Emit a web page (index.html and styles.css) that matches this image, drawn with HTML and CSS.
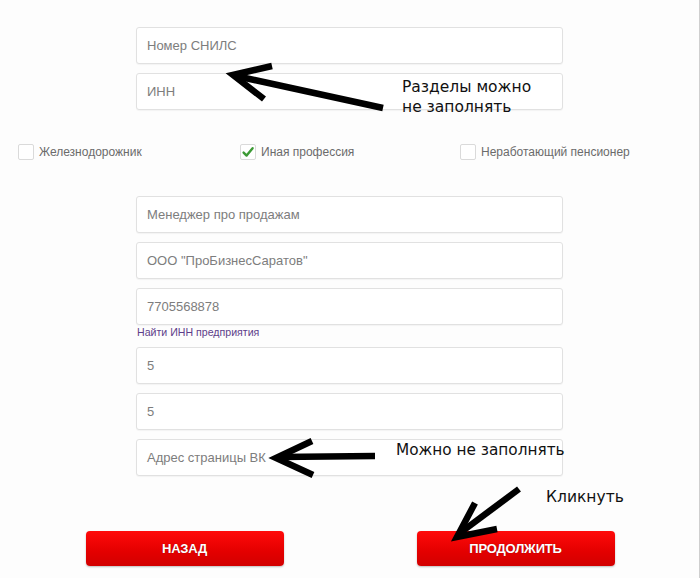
FILE: index.html
```html
<!DOCTYPE html>
<html lang="ru">
<head>
<meta charset="utf-8">
<title>Анкета</title>
<link rel="stylesheet" href="styles.css">
</head>
<body>
<div class="page">
  <div class="fields fields-top">
    <div class="input">Номер СНИЛС</div>
    <div class="input">ИНН</div>
  </div>

  <div class="checks">
    <label class="check"><span class="box"></span><span class="check-label">Железнодорожник</span></label>
    <label class="check"><span class="box checked"><svg viewBox="0 0 16 16" width="16" height="16"><path d="M3.6 8.6 L6.6 11.6 L12.6 4.2" fill="none" stroke="#3c9a35" stroke-width="2.4" stroke-linecap="round" stroke-linejoin="round"/></svg></span><span class="check-label">Иная профессия</span></label>
    <label class="check"><span class="box"></span><span class="check-label">Неработающий пенсионер</span></label>
  </div>

  <div class="fields">
    <div class="input">Менеджер про продажам</div>
    <div class="input">ООО "ПроБизнесСаратов"</div>
    <div class="input-group">
      <div class="input">7705568878</div>
      <a class="link" href="#">Найти ИНН предприятия</a>
    </div>
    <div class="input">5</div>
    <div class="input">5</div>
    <div class="input">Адрес страницы ВК</div>
  </div>

  <div class="buttons">
    <div class="btn">НАЗАД</div>
    <div class="btn">ПРОДОЛЖИТЬ</div>
  </div>

  <svg class="arrows" viewBox="0 0 700 578" width="700" height="578">
    <g fill="none" stroke="#000" stroke-width="6.5" stroke-linejoin="miter">
      <line x1="383" y1="108" x2="236" y2="76"/>
      <polyline points="272,66 233,75 264,99"/>
      <line x1="375" y1="456" x2="279" y2="457"/>
      <polyline points="312,441 276,458 313,475"/>
      <line x1="519" y1="489" x2="460" y2="533"/>
      <polyline points="475,503 457,537 497,529"/>
    </g>
  </svg>
  <div class="note note-1">Разделы можно<br>не заполнять</div>
  <div class="note note-2">Можно не заполнять</div>
  <div class="note note-3">Кликнуть</div>
</div>
</body>
</html>
```

FILE: styles.css
```css
html, body {
  margin: 0;
  padding: 0;
  background: #fdfdfd;
}
body {
  font-family: "Liberation Sans", Arial, sans-serif;
}
.page {
  position: relative;
  width: 700px;
  height: 578px;
  border-right: 1px solid #cfcfcf;
  padding-top: 27px;
  box-sizing: border-box;
  overflow: hidden;
}
.fields {
  width: 427px;
  margin-left: 136px;
  display: flex;
  flex-direction: column;
  gap: 9px;
}
.input {
  height: 37px;
  box-sizing: border-box;
  border: 1px solid #e1e1e1;
  border-radius: 3px;
  background: #fff;
  box-shadow: 0 1px 1px rgba(0,0,0,0.04);
  padding-left: 10px;
  display: flex;
  align-items: center;
  font-size: 13px;
  color: #7d7d7d;
}
.input-group {
  display: flex;
  flex-direction: column;
}
.link {
  font-size: 10.6px;
  line-height: 14px;
  color: #5d3d8a;
  text-decoration: none;
  margin-bottom: -1px;
  padding-left: 1px;
}
.checks {
  display: grid;
  grid-template-columns: 222px 220px 220px;
  padding-left: 18px;
  margin-top: 34px;
  margin-bottom: 36px;
  height: 16px;
}
.check {
  display: flex;
  align-items: center;
  gap: 5px;
}
.box {
  width: 16px;
  height: 16px;
  box-sizing: border-box;
  border: 1px solid #dadada;
  border-radius: 2px;
  background: #fff;
  display: block;
}
.box svg {
  display: block;
  margin: -1px;
}
.check-label {
  font-size: 12px;
  color: #6b6b6b;
}
.buttons {
  display: flex;
  justify-content: center;
  gap: 133px;
  margin-top: 55px;
  padding-left: 1px;
}
.btn {
  width: 198px;
  height: 35px;
  border-radius: 4px;
  background: linear-gradient(#ff0a0a, #e30000 60%, #d20000);
  box-shadow: 0 1px 2px rgba(0,0,0,0.25);
  color: #fff;
  font-weight: bold;
  font-size: 13px;
  display: flex;
  align-items: center;
  justify-content: center;
  text-shadow: 0 0 1px rgba(80,0,0,0.6);
  letter-spacing: -0.2px;
}
.arrows {
  position: absolute;
  left: 0;
  top: 0;
  pointer-events: none;
}
.note {
  position: absolute;
  font-family: "DejaVu Sans", Verdana, sans-serif;
  font-size: 15.5px;
  line-height: 20px;
  color: #111;
}
.note-1 { left: 402px; top: 77px; }
.note-2 { left: 396px; top: 440px; font-size: 15.3px; }
.note-3 { left: 546px; top: 487px; }
```
